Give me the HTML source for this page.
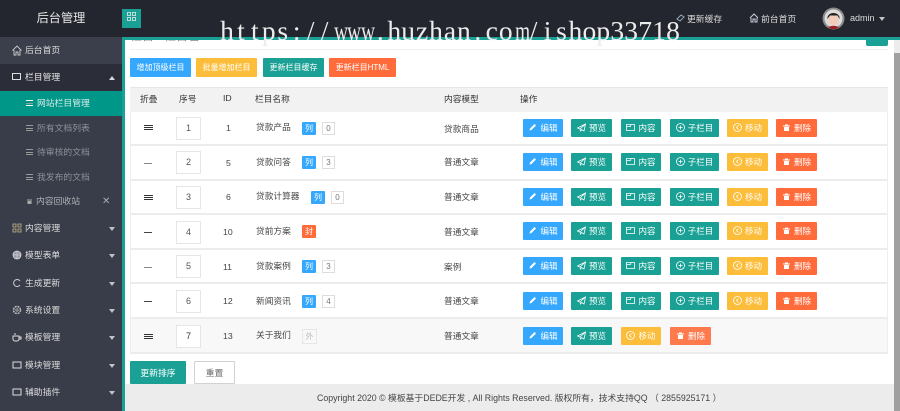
<!DOCTYPE html>
<html><head><meta charset="utf-8"><style>
*{box-sizing:border-box;margin:0;padding:0}
html,body{width:900px;height:411px;overflow:hidden;background:#fff;font-family:"Liberation Sans","Noto Sans CJK SC",sans-serif}
#wrap{position:absolute;left:0;top:0;width:900px;height:411px;filter:blur(.3px)}
.a{position:absolute}
#top{left:0;top:0;width:900px;height:37px;background:#23262e}
.tl{top:37px;left:122px;width:778px;height:3px;background:#1aa094}
.side{left:0;top:37px;width:122px;height:374px;background:#393d49}
.bar{left:122px;top:37px;width:3px;height:374px;background:#1aa094}
.it{position:absolute;left:0;width:122px;height:27px;line-height:27px;padding-left:25px;color:#dcdcdc;font-size:8.8px;white-space:nowrap}
.it svg{position:absolute;left:12px;top:8px}
.sb{position:absolute;left:0;width:122px;height:25px;line-height:25px;padding-left:37px;color:#8d9098;font-size:8.8px;white-space:nowrap}
.sb i{position:absolute;left:26px;top:9px;width:7px;height:6px;border-top:1px solid #999;border-bottom:1px solid #999}
.sb i:after{content:"";position:absolute;left:0;top:1.500px;width:7px;height:1px;background:#999}
.ar{position:absolute;left:109px;top:12px;width:0;height:0;border:3.500px solid transparent;border-top:4px solid #c2c2c2;border-bottom:0}
.btn{position:absolute;height:18px;padding-bottom:1px;color:#fff;font-size:8.500px;border-radius:1px;white-space:nowrap;display:flex;align-items:center;justify-content:center;gap:3px}
.btn svg{width:9px;height:9px;fill:none;stroke:#fff;stroke-width:1}
.bl{background:#35a8fd}.gr{background:#1aa094}.ye{background:#fbbd3a}.or{background:#ff6b3b}
.tb{position:absolute;height:19px;line-height:19px;top:58px;color:#fff;font-size:8px;text-align:center;border-radius:1px}
.row{position:absolute;left:130px;width:758px;border-bottom:2px solid #ececec;background:#fff}
.t{position:absolute;font-size:8.700px;color:#444;white-space:nowrap}
.inp{position:absolute;left:176px;width:25px;height:23px;line-height:21px;border:1px solid #e6e6e6;background:#fff;text-align:center;font-size:9px;color:#555}
.tag{position:absolute;width:14px;height:13px;line-height:13px;background:#35a8fd;color:#fff;font-size:8px;text-align:center;border-radius:1px}
.cnt{position:absolute;width:13px;height:13px;line-height:11px;border:1px solid #ddd;color:#777;font-size:8px;text-align:center}
.fold{position:absolute;left:144px;width:9px;height:5px;border-top:1px solid #333;border-bottom:1px solid #333}
.fold:after{content:"";position:absolute;left:0;top:1px;width:9px;height:1px;background:#333}
.dash{position:absolute;left:144px;width:8px;height:1px;background:#444}
#wm{left:220px;top:16px;font-family:"Liberation Serif",serif;font-size:27.500px;line-height:30px;color:#ececec;white-space:nowrap}
#wm b{display:inline-block;width:13.950px;text-align:center;font-weight:400}
#wm b.n{transform:scaleX(.7)}
</style></head><body>
<svg width="0" height="0" style="position:absolute"><defs>
<symbol id="e" viewBox="0 0 9 9"><path d="M1.500 7.500L2 5.500 6.500 1 8 2.500 3.500 7Z" fill="#fff" stroke="none"/></symbol>
<symbol id="p" viewBox="0 0 9 9"><path d="M.5 5L8.500 1 7 8 4.500 6.500 3.500 8 3 6ZM3 6L8.500 1" stroke-width=".8" fill="none" stroke="#fff"/></symbol>
<symbol id="f" viewBox="0 0 9 9"><path d="M.5 1.500h8v6h-8zM.5 3.500h4L5 1.500" fill="none" stroke="#fff" stroke-width=".8"/></symbol>
<symbol id="c" viewBox="0 0 9 9"><circle cx="4.500" cy="4.500" r="4" fill="none" stroke="#fff" stroke-width=".8"/><path d="M2.500 4.500h4M4.500 2.500v4" stroke="#fff" stroke-width=".8"/></symbol>
<symbol id="m" viewBox="0 0 9 9"><circle cx="4.500" cy="4.500" r="4" fill="none" stroke="#fff" stroke-width=".8"/><path d="M5.500 2.500L3.500 4.500 5.500 6.500" stroke="#fff" stroke-width=".8" fill="none"/></symbol>
<symbol id="d" viewBox="0 0 9 9"><path d="M1 2.500h7v1H1zM3 1.500h3v1H3zM2 4h5v4H2z" fill="#fff" stroke="none"/></symbol>
</defs></svg>
<div id="wrap">
<div class="a" id="top"></div>
<div class="a" style="left:0;top:0;width:122px;height:37px;line-height:36px;text-align:center;color:#e6e6e6;font-size:12.200px">后台管理</div>
<div class="a" style="left:122px;top:9px;width:19px;height:19px;background:#1aa094"></div>
<svg class="a" style="left:127px;top:12px" width="9" height="9"><path d="M.5.5h3v3h-3zM5.500.5h3v3h-3zM.5 5.500h3v3h-3zM5.500 5.500h3v3h-3z" fill="none" stroke="#eee" stroke-width=".8"/></svg>
<div class="a t" style="left:687px;top:12px;color:#dcdcdc;font-size:8.800px">更新缓存</div>
<svg class="a" style="left:676px;top:13px" width="9" height="10"><path d="M1 6L5 2 8 4 4 8Z" fill="none" stroke="#9ab" stroke-width="1"/></svg>
<div class="a t" style="left:761px;top:12px;color:#dcdcdc;font-size:8.800px">前台首页</div>
<svg class="a" style="left:749px;top:13px" width="10" height="10"><path d="M1 5L5 1 9 5M2 5V9H4V6H6V9H8V5" fill="none" stroke="#ccd" stroke-width="1"/></svg>
<svg class="a" style="left:822px;top:7px" width="23" height="23"><circle cx="11.500" cy="11.500" r="11" fill="#8d8d8d"/><circle cx="11.500" cy="11.500" r="9" fill="#dedcdb"/><ellipse cx="11.500" cy="12.500" rx="5" ry="6" fill="#f0cdb8"/><path d="M5.500 12C4.500 4 18.500 4 17.500 12L15.500 8.500H8Z" fill="#222"/><path d="M6 20Q11.500 17.500 17 20L14 22H9Z" fill="#9c2020"/></svg>
<div class="a t" style="left:850px;top:13px;color:#dcdcdc;font-size:9px">admin</div>
<div class="a" style="left:879px;top:17px;border:3.500px solid transparent;border-top:4px solid #c2c2c2;border-bottom:0"></div>

<div class="a side"></div>
<div class="a tl"></div>
<div class="a bar"></div>
<div class="it" style="top:37px;background:#3b3f4b"><svg width="10" height="11"><path d="M.5 5.500L5 1l4.500 4.500M2 5v5h2V7h2v3h2V5" fill="none" stroke="#ccc" stroke-width=".9"/></svg>后台首页</div>
<div class="it" style="top:64px;background:#2b2e38;color:#e6e6e6"><svg width="10" height="10"><rect x=".5" y="1.500" width="8" height="6" fill="none" stroke="#ddd"/></svg>栏目管理<span style="position:absolute;left:109px;top:12px;border:3.500px solid transparent;border-bottom:4px solid #d8d8d8;border-top:0"></span></div>
<div class="sb" style="top:91px;background:#009688;color:#d9ebe9"><i style="border-color:#fff"></i>网站栏目管理</div>
<div class="sb" style="top:116px"><i></i>所有文档列表</div>
<div class="sb" style="top:140px"><i></i>待审核的文档</div>
<div class="sb" style="top:165px"><i></i>我发布的文档</div>
<div class="sb" style="top:189px;padding-left:36px;color:#b0b2b8"><svg class="a" style="left:26px;top:9px" width="7" height="7"><path d="M1 1.500h5v1H1zM1.500 3h4v3h-4z" fill="#aaa"/></svg>内容回收站<span style="position:absolute;left:102px;top:0;font-size:10px;color:#aaa">✕</span></div>
<div class="it" style="top:215px"><svg width="10" height="10"><path d="M1 1h3v3H1zM6 1h3v3H6zM1 6h3v3H1zM6 6h3v3H6z" fill="none" stroke="#c9b98a" stroke-width=".8"/></svg>内容管理<span class="ar"></span></div>
<div class="it" style="top:242px"><svg width="10" height="10"><circle cx="5" cy="5" r="4" fill="#99a" stroke="#ddd" stroke-width=".8"/><path d="M1 5h8M5 1v8" stroke="#ddd" stroke-width=".6"/></svg>模型表单<span class="ar"></span></div>
<div class="it" style="top:270px"><svg width="10" height="10"><path d="M8 3A3.500 3.500 0 1 0 8 7" fill="none" stroke="#ccc"/></svg>生成更新<span class="ar"></span></div>
<div class="it" style="top:297px"><svg width="10" height="10"><circle cx="5" cy="5" r="3.500" fill="none" stroke="#bbb" stroke-width="1.500" stroke-dasharray="2 .8"/><circle cx="5" cy="5" r="1.200" fill="none" stroke="#ccc" stroke-width=".7"/></svg>系统设置<span class="ar"></span></div>
<div class="it" style="top:324px"><svg width="10" height="10"><path d="M1 4h6v3a2 2 0 0 1-2 2H3a2 2 0 0 1-2-2zM7 5h2v2H7M3 1v2" fill="none" stroke="#ddd"/></svg>模板管理<span class="ar"></span></div>
<div class="it" style="top:352px"><svg width="10" height="10"><path d="M.5 2h9M1 2v6h8V2" fill="none" stroke="#ddd"/></svg>模块管理<span class="ar"></span></div>
<div class="it" style="top:379px"><svg width="10" height="10"><path d="M.5 2h9M1 2v6h8V2" fill="none" stroke="#ddd"/></svg>辅助插件<span class="ar"></span></div>

<div class="a" style="left:130px;top:40px;width:70px;height:2px;overflow:hidden"><div class="a" style="left:0;top:-11px;font-size:12px;line-height:14px;color:#888;white-space:nowrap">栏目 &nbsp; 栏目管理</div></div>
<div class="a" style="left:130px;top:49px;width:758px;height:1px;background:#f0f0f0"></div>
<div class="a" style="left:866px;top:40px;width:22px;height:6px;background:#1aa094;border-radius:0 0 2px 2px"></div>
<div class="a" style="left:888px;top:40px;width:6px;height:344px;background:#fff"></div>
<div class="a" style="left:894px;top:40px;width:6px;height:371px;background:#ececec"></div>
<div class="a" style="left:894px;top:53px;width:6px;height:358px;background:#a0a0a0"></div>

<div class="tb bl" style="left:130px;width:61px">增加顶级栏目</div>
<div class="tb ye" style="left:196px;width:61px">批量增加栏目</div>
<div class="tb gr" style="left:263px;width:61px">更新栏目缓存</div>
<div class="tb or" style="left:329px;width:67px">更新栏目HTML</div>

<div class="a" style="left:130px;top:87px;width:758px;height:25px;background:#f2f2f2;border-top:1px solid #e6e6e6"></div>
<div class="t" style="left:140px;top:92px;color:#333">折叠</div>
<div class="t" style="left:179px;top:92px;color:#333">序号</div>
<div class="t" style="left:223px;top:93px;color:#333">ID</div>
<div class="t" style="left:255px;top:92px;color:#333">栏目名称</div>
<div class="t" style="left:444px;top:92px;color:#333">内容模型</div>
<div class="t" style="left:520px;top:92px;color:#333">操作</div>

<div class="row" style="top:112px;height:34px"></div>
<div class="row" style="top:146px;height:35px"></div>
<div class="row" style="top:181px;height:34px"></div>
<div class="row" style="top:215px;height:35px"></div>
<div class="row" style="top:250px;height:34px"></div>
<div class="row" style="top:284px;height:35px"></div>
<div class="row" style="top:319px;height:35px;background:#f8f8f8"></div>
<div class="a" style="left:130px;top:112px;width:1px;height:242px;background:#eee"></div>
<div class="a" style="left:887px;top:112px;width:1px;height:242px;background:#eee"></div>

<div class="fold" style="top:125px"></div><div class="inp" style="top:117px">1</div><div class="t" style="left:226px;top:123px">1</div><div class="t" style="left:256px;top:120px">贷款产品</div><div class="tag" style="left:302px;top:122px">列</div><div class="cnt" style="left:322px;top:122px">0</div><div class="t" style="left:444px;top:122px">贷款商品</div>
<div class="dash" style="top:163px;background:#888"></div><div class="inp" style="top:151px">2</div><div class="t" style="left:226px;top:158px">5</div><div class="t" style="left:256px;top:155px">贷款问答</div><div class="tag" style="left:302px;top:156px">列</div><div class="cnt" style="left:322px;top:156px">3</div><div class="t" style="left:444px;top:155px">普通文章</div>
<div class="fold" style="top:195px"></div><div class="inp" style="top:186px">3</div><div class="t" style="left:226px;top:192px">6</div><div class="t" style="left:256px;top:189px">贷款计算器</div><div class="tag" style="left:311px;top:191px">列</div><div class="cnt" style="left:331px;top:191px">0</div><div class="t" style="left:444px;top:190px">普通文章</div>
<div class="dash" style="top:232px"></div><div class="inp" style="top:221px">4</div><div class="t" style="left:223px;top:227px">10</div><div class="t" style="left:256px;top:224px">贷前方案</div><div class="tag" style="left:302px;top:225px;background:#ff6b3b">封</div><div class="t" style="left:444px;top:225px">普通文章</div>
<div class="dash" style="top:267px;background:#888"></div><div class="inp" style="top:255px">5</div><div class="t" style="left:223px;top:262px">11</div><div class="t" style="left:256px;top:259px">贷款案例</div><div class="tag" style="left:302px;top:260px">列</div><div class="cnt" style="left:322px;top:260px">3</div><div class="t" style="left:444px;top:260px">案例</div>
<div class="dash" style="top:301px"></div><div class="inp" style="top:290px">6</div><div class="t" style="left:223px;top:296px">12</div><div class="t" style="left:256px;top:294px">新闻资讯</div><div class="tag" style="left:302px;top:295px">列</div><div class="cnt" style="left:322px;top:295px">4</div><div class="t" style="left:444px;top:294px">普通文章</div>
<div class="fold" style="top:334px"></div><div class="inp" style="top:325px;color:#333">7</div><div class="t" style="left:223px;top:331px">13</div><div class="t" style="left:256px;top:328px">关于我们</div><div class="cnt" style="left:302px;top:329px;width:15px;height:15px;line-height:13px;color:#bbb;border-color:#e6e6e6">外</div><div class="t" style="left:444px;top:329px">普通文章</div>

<div class="btn bl" style="left:523px;top:119px;width:40px"><svg><use href="#e"/></svg>编辑</div><div class="btn gr" style="left:571px;top:119px;width:41px"><svg><use href="#p"/></svg>预览</div><div class="btn gr" style="left:621px;top:119px;width:40px"><svg><use href="#f"/></svg>内容</div><div class="btn gr" style="left:670px;top:119px;width:49px"><svg><use href="#c"/></svg>子栏目</div><div class="btn ye" style="left:727px;top:119px;width:41px"><svg><use href="#m"/></svg>移动</div><div class="btn or" style="left:776px;top:119px;width:41px"><svg><use href="#d"/></svg>删除</div>
<div class="btn bl" style="left:523px;top:153px;width:40px"><svg><use href="#e"/></svg>编辑</div><div class="btn gr" style="left:571px;top:153px;width:41px"><svg><use href="#p"/></svg>预览</div><div class="btn gr" style="left:621px;top:153px;width:40px"><svg><use href="#f"/></svg>内容</div><div class="btn gr" style="left:670px;top:153px;width:49px"><svg><use href="#c"/></svg>子栏目</div><div class="btn ye" style="left:727px;top:153px;width:41px"><svg><use href="#m"/></svg>移动</div><div class="btn or" style="left:776px;top:153px;width:41px"><svg><use href="#d"/></svg>删除</div>
<div class="btn bl" style="left:523px;top:188px;width:40px"><svg><use href="#e"/></svg>编辑</div><div class="btn gr" style="left:571px;top:188px;width:41px"><svg><use href="#p"/></svg>预览</div><div class="btn gr" style="left:621px;top:188px;width:40px"><svg><use href="#f"/></svg>内容</div><div class="btn gr" style="left:670px;top:188px;width:49px"><svg><use href="#c"/></svg>子栏目</div><div class="btn ye" style="left:727px;top:188px;width:41px"><svg><use href="#m"/></svg>移动</div><div class="btn or" style="left:776px;top:188px;width:41px"><svg><use href="#d"/></svg>删除</div>
<div class="btn bl" style="left:523px;top:222px;width:40px"><svg><use href="#e"/></svg>编辑</div><div class="btn gr" style="left:571px;top:222px;width:41px"><svg><use href="#p"/></svg>预览</div><div class="btn gr" style="left:621px;top:222px;width:40px"><svg><use href="#f"/></svg>内容</div><div class="btn gr" style="left:670px;top:222px;width:49px"><svg><use href="#c"/></svg>子栏目</div><div class="btn ye" style="left:727px;top:222px;width:41px"><svg><use href="#m"/></svg>移动</div><div class="btn or" style="left:776px;top:222px;width:41px"><svg><use href="#d"/></svg>删除</div>
<div class="btn bl" style="left:523px;top:257px;width:40px"><svg><use href="#e"/></svg>编辑</div><div class="btn gr" style="left:571px;top:257px;width:41px"><svg><use href="#p"/></svg>预览</div><div class="btn gr" style="left:621px;top:257px;width:40px"><svg><use href="#f"/></svg>内容</div><div class="btn gr" style="left:670px;top:257px;width:49px"><svg><use href="#c"/></svg>子栏目</div><div class="btn ye" style="left:727px;top:257px;width:41px"><svg><use href="#m"/></svg>移动</div><div class="btn or" style="left:776px;top:257px;width:41px"><svg><use href="#d"/></svg>删除</div>
<div class="btn bl" style="left:523px;top:292px;width:40px"><svg><use href="#e"/></svg>编辑</div><div class="btn gr" style="left:571px;top:292px;width:41px"><svg><use href="#p"/></svg>预览</div><div class="btn gr" style="left:621px;top:292px;width:40px"><svg><use href="#f"/></svg>内容</div><div class="btn gr" style="left:670px;top:292px;width:49px"><svg><use href="#c"/></svg>子栏目</div><div class="btn ye" style="left:727px;top:292px;width:41px"><svg><use href="#m"/></svg>移动</div><div class="btn or" style="left:776px;top:292px;width:41px"><svg><use href="#d"/></svg>删除</div>
<div class="btn bl" style="left:523px;top:327px;width:40px"><svg><use href="#e"/></svg>编辑</div><div class="btn gr" style="left:571px;top:327px;width:41px"><svg><use href="#p"/></svg>预览</div><div class="btn ye" style="left:621px;top:327px;width:40px"><svg><use href="#m"/></svg>移动</div><div class="btn" style="left:670px;top:327px;width:41px;background:#ff7a4d"><svg><use href="#d"/></svg>删除</div>

<div class="btn gr" style="left:130px;top:361px;width:56px;height:23px;font-size:8.800px">更新排序</div>
<div class="btn" style="left:194px;top:361px;width:41px;height:23px;font-size:8.800px;color:#666;border:1px solid #d2d2d2;background:#fff">重置</div>

<div class="a" style="left:125px;top:384px;width:769px;height:27px;background:#ececec"></div>
<div class="a t" style="left:317px;top:391px;font-size:8.800px;color:#444">Copyright 2020 © 模板基于DEDE开发 , All Rights Reserved. 版权所有，技术支持QQ （ 2855925171 ）</div>

<div class="a" id="wm"><b>h</b><b>t</b><b>t</b><b>p</b><b>s</b><b>:</b><b>/</b><b>/</b><b class="n">w</b><b class="n">w</b><b class="n">w</b><b>.</b><b>h</b><b>u</b><b>z</b><b>h</b><b>a</b><b>n</b><b>.</b><b>c</b><b>o</b><b class="n">m</b><b>/</b><b>i</b><b>s</b><b>h</b><b>o</b><b>p</b><b>3</b><b>3</b><b>7</b><b>1</b><b>8</b></div>
</div>
</body></html>
